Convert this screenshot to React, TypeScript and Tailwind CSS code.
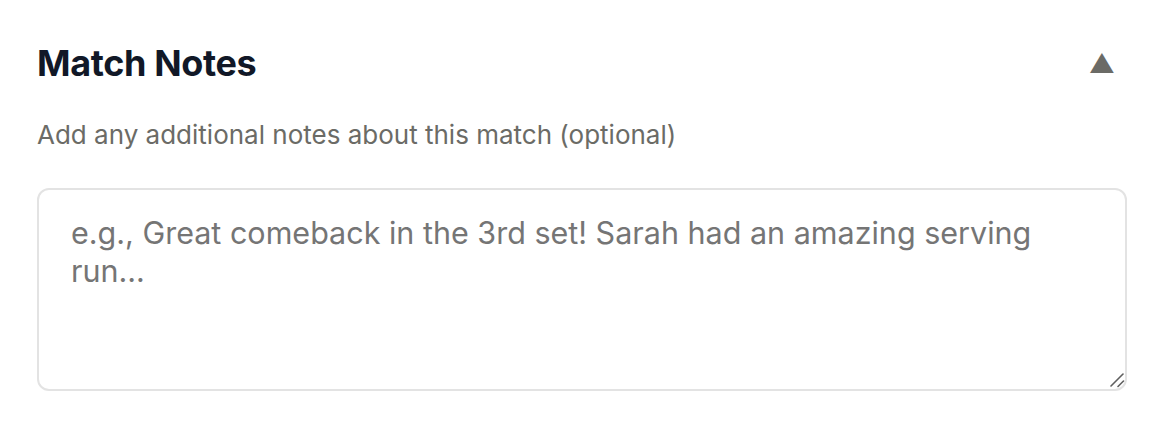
import { useState } from 'react';

export default function App() {
  const [open, setOpen] = useState(true);
  const [notes, setNotes] = useState('');

  return (
    <div className="min-h-screen bg-white px-[37px] pt-[41px] font-['Inter',sans-serif]">
      {/* Header */}
      <div className="flex items-center justify-between">
        <h2 className="text-[36px] leading-[45px] font-bold tracking-[-0.01em] text-[#111827]">Match Notes</h2>
        <button type="button" onClick={() => setOpen(!open)} className="mr-[12px] text-[26px] leading-none text-[#6b6b66]">
          {open ? '▲' : '▼'}
        </button>
      </div>

      {open && (
        <>
          <p className="mt-[33px] text-[26px] leading-[32px] text-[#6b6b66]">
            Add any additional notes about this match (optional)
          </p>
          <div className="relative mt-[37px]">
            <textarea
              value={notes}
              onChange={(e) => setNotes(e.target.value)}
              placeholder="e.g., Great comeback in the 3rd set! Sarah had an amazing serving run..."
              className="block h-[203px] w-full resize-none rounded-[12px] border-2 border-[#e3e3e3] px-[32px] pt-[24px] pb-[20px] text-[30.5px] leading-[38px] text-[#111827] placeholder:text-[#757575] outline-none"
            />
            {/* resize grip */}
            <svg className="pointer-events-none absolute bottom-[3px] right-[2px] h-[16px] w-[16px]" viewBox="0 0 16 16" fill="none" stroke="#5f5f5f" strokeWidth="1.6" strokeLinecap="round">
              <path d="M2 14L14 2" />
              <path d="M9 14.5L14.5 9" />
            </svg>
          </div>
        </>
      )}
    </div>
  );
}
